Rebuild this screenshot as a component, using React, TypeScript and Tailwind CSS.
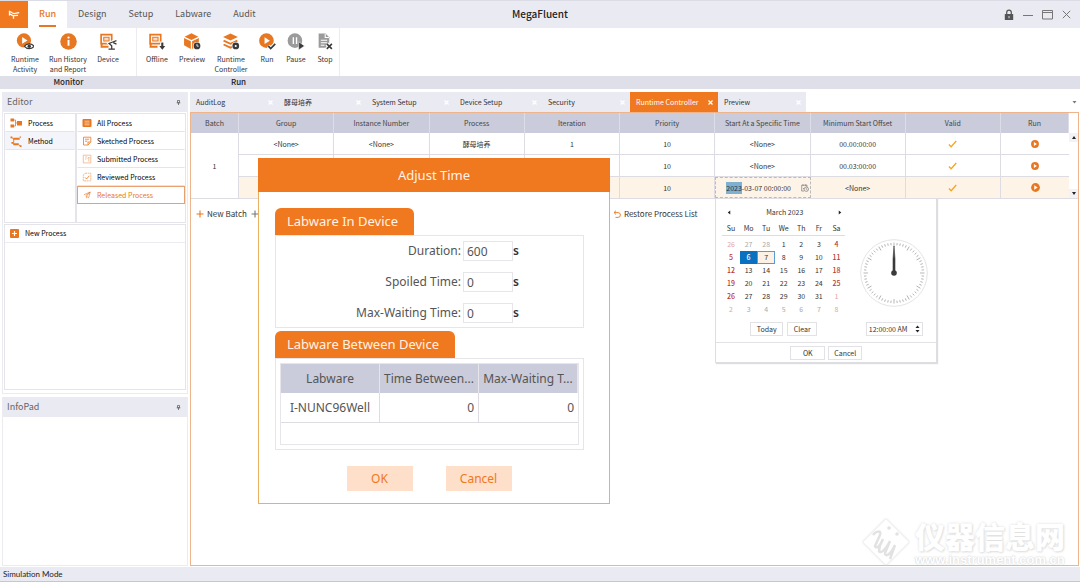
import { useEffect, useRef, type ReactNode } from 'react'
import clsx from 'clsx'

/* ---------- icons ---------- */

const ORANGE = '#e87722'
const DARK = '#3a3a3a'

function Eye() {
  return (
    <g>
      <path d="M8 12.5C10 9.5 15 9.5 17 12.5C15 15.5 10 15.5 8 12.5Z" fill="#fff" stroke={DARK} strokeWidth="1.2" />
      <circle cx="12.5" cy="12.5" r="1.6" fill={DARK} />
    </g>
  )
}

function ScreenShape() {
  return (
    <g>
      <path d="M2 1.5H12V10H2Z" fill="none" stroke={ORANGE} strokeWidth="1.6" />
      <path d="M4.5 4H9.5V7.5H4.5Z" fill="#fbd9bf" stroke={ORANGE} strokeWidth="1" />
      <path d="M1.5 13H9M2.5 10V13" stroke={ORANGE} strokeWidth="1.8" fill="none" />
    </g>
  )
}

const ribbonIcons: Record<string, ReactNode> = {
  activity: (
    <g>
      <circle cx="7.5" cy="7" r="6.7" fill={ORANGE} />
      <path d="M5.8 3.8L10.8 7L5.8 10.2Z" fill="#fff" />
      <Eye />
    </g>
  ),
  info: (
    <g>
      <circle cx="9" cy="8" r="7.8" fill={ORANGE} />
      <circle cx="9" cy="4.3" r="1.1" fill="#fff" />
      <path d="M9 6.5V12" stroke="#fff" strokeWidth="1.8" />
    </g>
  ),
  device: (
    <g>
      <ScreenShape />
      <path d="M9 15.5H15M12 15V12L9.5 9.8L13 8.5H16M12.5 8.5L16.5 7M13 9L16.5 10.5" stroke="#fff" strokeWidth="3" fill="none" />
      <path d="M9 15.3H15M12 15V12L9.5 9.8L13 8.5M13 8.5L16.5 7.2M13.5 9L16.5 10.5" stroke={DARK} strokeWidth="1.2" fill="none" />
    </g>
  ),
  offline: (
    <g>
      <ScreenShape />
      <path d="M13.5 8V15.5" stroke="#fff" strokeWidth="4" />
      <path d="M13.5 9V13" stroke={DARK} strokeWidth="2" />
      <path d="M10.7 12.2H16.3L13.5 15.8Z" fill={DARK} />
    </g>
  ),
  preview: (
    <g>
      <path d="M8 0.3L14.5 3.4L8 6.7L1.5 3.4Z" fill={ORANGE} />
      <path d="M1 4.6L7.4 7.8V15L1 11.6Z" fill={ORANGE} />
      <path d="M15 4.6L8.6 7.8V15L15 11.6Z" fill={ORANGE} />
      <circle cx="13.2" cy="12.2" r="3.8" fill="#fff" />
      <circle cx="13.2" cy="12.2" r="3.2" fill={DARK} />
      <path d="M13.2 10.3V12.4H14.8" stroke="#fff" strokeWidth="0.8" fill="none" />
    </g>
  ),
  layers: (
    <g>
      <path d="M8 0.5L15 3.7L8 7L1 3.7Z" fill={ORANGE} />
      <path d="M1.5 7.2L8 10.2L14.5 7.2M1.5 10.8L8 13.8L14.5 10.8" stroke={ORANGE} strokeWidth="1.7" fill="none" />
      <circle cx="13" cy="12.2" r="3.8" fill="#fff" />
      <circle cx="13" cy="12.2" r="3.2" fill={DARK} />
      <circle cx="13" cy="12.2" r="1" fill="#fff" />
    </g>
  ),
  run: (
    <g>
      <circle cx="8" cy="7.2" r="6.9" fill={ORANGE} />
      <path d="M6.2 4L11.2 7.2L6.2 10.4Z" fill="#fff" />
      <path d="M9.8 12.3L12 14.6L16.3 10.2" stroke="#fff" strokeWidth="3.6" fill="none" />
      <path d="M9.8 12.3L12 14.6L16.3 10.2" stroke={DARK} strokeWidth="1.6" fill="none" />
    </g>
  ),
  pause: (
    <g>
      <circle cx="7.5" cy="7.2" r="6.9" fill="#9b9b9b" />
      <path d="M6 4V10.4M9 4V10.4" stroke="#fff" strokeWidth="1.3" />
      <path d="M11 8.2L16.5 12.2L11 16Z" fill={DARK} stroke="#fff" strokeWidth="0.5" />
    </g>
  ),
  stop: (
    <g>
      <path d="M2.5 0.5H9L12.5 4V14H2.5Z" fill="#9b9b9b" />
      <path d="M8.7 1V4.3H12.3M4.5 6.8H10.5M4.5 9.2H10.5M4.5 11.6H8" stroke="#fff" strokeWidth="1" fill="none" />
      <path d="M10.2 10.2L15 15M15 10.2L10.2 15" stroke="#fff" strokeWidth="3.6" />
      <path d="M10.2 10.2L15 15M15 10.2L10.2 15" stroke={DARK} strokeWidth="1.5" />
    </g>
  ),
}

function PinIcon() {
  return (
    <svg viewBox="0 0 6 6" className="size-[5px]">
      <path d="M1.8 0.5H4.2V3.2H1.8ZM0.8 3.4H5.2M3 3.4V6" stroke="#666" strokeWidth="1" fill="none" />
    </svg>
  )
}

const listIcons: Record<string, ReactNode> = {
  all: (
    <g>
      <rect x="0.5" y="1" width="9" height="8" rx="1" fill={ORANGE} />
      <path d="M2.5 3.2H7.5M2.5 5H7.5M2.5 6.8H7.5" stroke="#ffd9b8" strokeWidth="0.8" />
    </g>
  ),
  sketched: (
    <path d="M1.5 1.2H8.8V6L6 9H1.5ZM8.6 6H6V8.8M3 3.2H7.2M3 5.2H5.5" stroke={ORANGE} strokeWidth="0.8" fill="none" />
  ),
  submitted: (
    <path d="M1.3 1.2H8.8V8.9H1.3ZM3 3H5.2M3 5H4.5M6.8 7.5V3.4M5.5 4.5L6.8 3.2L8 4.5" stroke="#f0a875" strokeWidth="0.7" fill="none" />
  ),
  reviewed: (
    <g stroke="#f0a875" strokeWidth="0.8" fill="none">
      <path d="M3 1.2H8.8V8.9H1.3V3Z" strokeDasharray="2 0.6" />
      <path d="M3 5.4L4.6 7L7.2 3.8" stroke={ORANGE} />
    </g>
  ),
  released: (
    <path d="M1.8 4.8L8.2 2L6.6 7.8L4.4 6.2L8.2 2L3.8 5.4M4.4 6.2V8.2" stroke={ORANGE} strokeWidth="0.6" fill="none" />
  ),
}

function PlayDot({ big }: { big?: boolean }) {
  return (
    <svg viewBox="0 0 10 10" className={clsx('mx-auto', big ? 'size-[9px]' : 'size-[8px]')}>
      <circle cx="5" cy="5" r="4.9" fill={ORANGE} />
      <path d="M3.6 2.5L7.4 5L3.6 7.5Z" fill="#fff" />
    </svg>
  )
}

function Tick() {
  return (
    <svg viewBox="0 0 10 9" className="mx-auto h-[8px] w-[9px]">
      <path d="M1 5L3.5 7.5L9.2 1.2" stroke="#f5a623" strokeWidth="1.5" fill="none" />
    </svg>
  )
}

/* ---------- title bar and ribbon ---------- */

const menus = ['Run', 'Design', 'Setup', 'Labware', 'Audit']

function TitleBar() {
  return (
    <header className="relative flex h-[28px] items-stretch border-t border-[#dcdce6] bg-[#eaeaf2]">
      <div className="flex w-[28px] items-center justify-center bg-[#f0781e]">
        <svg viewBox="0 0 12 12" className="size-[12px]">
          <path d="M1 2L4.5 4L6 4.6L11.2 3.6M1.5 2V6.5M2 5L4.8 6.6L10 6.4M5.5 6.6V9.8" stroke="#fff" strokeWidth="1.3" fill="none" />
        </svg>
      </div>
      <nav className="flex">
        {menus.map((m) => (
          <button
            key={m}
            className={clsx(
              'px-[11px] text-[9px] leading-[14px]',
              m === 'Run' ? 'bg-white font-medium text-[#e87722]' : 'text-[#555]',
            )}
          >
            <span className={clsx('block border-b-2 pt-[5px] pb-1', m === 'Run' ? 'border-[#e87722]' : 'border-transparent')}>{m}</span>
          </button>
        ))}
      </nav>
      <h1 className="absolute inset-x-0 top-[6px] mx-auto w-fit text-[10px] leading-[14px] font-medium text-[#222]">MegaFluent</h1>
      <div className="ml-auto flex items-center gap-[9px] pr-[9px]">
        <button aria-label="Lock">
          <svg viewBox="0 0 10 12" className="h-[12px] w-[10px]">
            <path d="M2.7 5.5V3.5A2.3 2.3 0 0 1 7.3 3.5V5.5" stroke="#555" strokeWidth="1.2" fill="none" />
            <rect x="0.8" y="5" width="8.4" height="6" rx="0.6" fill="#555" />
            <path d="M5 7V9.3" stroke="#ddd" strokeWidth="1" />
          </svg>
        </button>
        <button aria-label="Minimize">
          <svg viewBox="0 0 10 10" className="size-[10px]"><path d="M0 5.5H10" stroke="#777" /></svg>
        </button>
        <button aria-label="Maximize">
          <svg viewBox="0 0 11 10" className="h-[10px] w-[11px]">
            <path d="M0.5 0.5H10.5V9H0.5ZM0.5 2.5H10.5" stroke="#777" fill="none" />
          </svg>
        </button>
        <button aria-label="Close">
          <svg viewBox="0 0 9 9" className="size-[9px]"><path d="M0.8 0.8L8.2 8.2M8.2 0.8L0.8 8.2" stroke="#777" /></svg>
        </button>
      </div>
    </header>
  )
}

const groups = [
  {
    name: 'Monitor',
    box: 'w-[137px] pl-1',
    items: [
      { icon: 'activity', label: ['Runtime', 'Activity'], w: 'w-[42px]' },
      { icon: 'info', label: ['Run History', 'and Report'], w: 'w-[44px]' },
      { icon: 'device', label: ['Device'], w: 'w-[36px]' },
    ],
  },
  {
    name: 'Run',
    box: 'w-[203px] pl-[2px]',
    items: [
      { icon: 'offline', label: ['Offline'], w: 'w-[36px]' },
      { icon: 'preview', label: ['Preview'], w: 'w-[34px]' },
      { icon: 'layers', label: ['Runtime', 'Controller'], w: 'w-[44px]' },
      { icon: 'run', label: ['Run'], w: 'w-[28px]' },
      { icon: 'pause', label: ['Pause'], w: 'w-[30px]' },
      { icon: 'stop', label: ['Stop'], w: 'w-[28px]' },
    ],
  },
]

function Ribbon() {
  return (
    <div className="flex bg-linear-to-b from-white from-[48px] to-[#dedfe9] to-[48px]">
      {groups.map((g) => (
        <section key={g.name}>
          <div className={clsx('flex h-[48px] border-r border-[#ececf0] pt-[5px]', g.box)}>
            {g.items.map((it) => (
              <button key={it.icon} className={clsx('flex shrink-0 flex-col items-center text-[7px] leading-[10px] text-[#333]', it.w)}>
                <svg viewBox="0 0 17 16" className="mb-[4px] h-[17px] w-[18px]">{ribbonIcons[it.icon]}</svg>
                {it.label.map((l) => <span key={l} className="whitespace-nowrap">{l}</span>)}
              </button>
            ))}
          </div>
          <h2 className="text-center text-[8px] leading-[12px] font-medium text-[#222]">{g.name}</h2>
          <div className="h-px" />
        </section>
      ))}
    </div>
  )
}

/* ---------- left side ---------- */

const processLists = [
  { icon: 'all', label: 'All Process' },
  { icon: 'sketched', label: 'Sketched Process' },
  { icon: 'submitted', label: 'Submitted Process' },
  { icon: 'reviewed', label: 'Reviewed Process' },
  { icon: 'released', label: 'Released Process' },
]

function PanelHeader({ title }: { title: string }) {
  return (
    <div className="flex h-[20px] items-center justify-between bg-[#eaeaf2] pr-[6px] pl-1">
      <h2 className="text-[9px] leading-[14px] text-[#666]">{title}</h2>
      <button aria-label={`Pin ${title}`}><PinIcon /></button>
    </div>
  )
}

function Sidebar() {
  return (
    <aside className="flex w-[186px] shrink-0 flex-col gap-[3px] text-[7px] leading-[17px] text-black">
      <section className="flex h-[302px] flex-col border border-[#ececf0] border-t-0">
        <PanelHeader title="Editor" />
        <div className="mx-px mt-px flex h-[110px] border border-[#e4e4ea]">
          <div className="w-[72px] border-r-2 border-[#e4e4ea]">
            <button className="flex h-[18px] w-full items-center gap-[6px] border border-transparent border-b-[#e4e4ea] pl-1">
              <svg viewBox="0 0 12 10" className="h-[10px] w-[12px]">
                <path d="M0.5 0.5H4V3.5H0.5ZM0.5 6.5H4V9.5H0.5ZM7 3H12V7.5H7Z" fill={ORANGE} />
                <path d="M4 2H5.5V8H4M5.5 5H7" stroke={ORANGE} strokeWidth="0.8" fill="none" />
              </svg>
              <span>Process</span>
            </button>
            <button className="flex h-[18px] w-full items-center gap-[6px] border border-transparent border-b-[#e4e4ea] bg-[#f4f5fa] pl-1">
              <svg viewBox="0 0 12 12" className="h-[11px] w-[12px]">
                <path d="M0 0.5H2V2.5H0ZM3 1.8H10V4H3ZM3 8H9V10.2H3ZM1 6.5H3V8.5H1ZM10 10H12V12H10ZM10 0.5H11.5V2H10Z" fill={ORANGE} />
                <path d="M1.5 2L3.5 3M3.5 3.5V8.5M9 9.5L11 11" stroke={ORANGE} strokeWidth="1" fill="none" />
              </svg>
              <span>Method</span>
            </button>
          </div>
          <div className="flex-1">
            {processLists.map((p) => (
              <button
                key={p.icon}
                className={clsx(
                  'flex h-[18px] w-full items-center gap-[5px] border pl-1',
                  p.icon === 'released' ? 'border-[#e9a070] text-[#e87722]' : 'border-transparent border-b-[#e4e4ea]',
                )}
              >
                <svg viewBox="0 0 10 10" className="size-[10px] shrink-0">{listIcons[p.icon]}</svg>
                <span className="whitespace-nowrap">{p.label}</span>
              </button>
            ))}
          </div>
        </div>
        <div className="mx-px mt-px mb-[3px] flex-1 border border-[#e4e4ea]">
          <button className="flex h-[18px] w-full items-center gap-[6px] border-b border-[#ececf0] pl-[5px]">
            <svg viewBox="0 0 10 10" className="size-[9px]">
              <rect width="10" height="10" rx="1" fill={ORANGE} />
              <path d="M5 2.2V7.8M2.2 5H7.8" stroke="#fff" strokeWidth="1.3" />
            </svg>
            <span>New Process</span>
          </button>
        </div>
      </section>
      <section className="flex-1 border border-t-0 border-[#ececf0]">
        <PanelHeader title="InfoPad" />
      </section>
    </aside>
  )
}

/* ---------- date picker ---------- */

const weekDays = ['Su', 'Mo', 'Tu', 'We', 'Th', 'Fr', 'Sa']
// February 26 is the first visible day, 28 days in that month
const weeks = Array.from({ length: 6 }, (_, w) =>
  weekDays.map((_, d) => {
    const n = w * 7 + d - 2
    if (n < 1) return { day: n + 28, out: true }
    if (n > 31) return { day: n - 31, out: true }
    return { day: n, out: false }
  }),
)

function dayClass(day: number, out: boolean, col: number) {
  const weekend = col === 0 || col === 6
  if (out) return weekend ? 'text-[#e5a5a0]' : 'text-[#aaa]'
  if (day === 6) return 'bg-[#0a70c0] text-white font-medium'
  if (day === 7) return 'bg-[#fdf1e6] ring-1 ring-inset ring-[#5b9bd5] text-[#333]'
  return weekend ? 'text-[#c0392b] font-medium' : 'text-[#333]'
}

function Clock() {
  return (
    <svg viewBox="0 0 68 68" className="size-[68px]">
      <circle cx="34" cy="34" r="33.3" fill="#fff" stroke="#dcdcdc" strokeWidth="0.8" />
      {Array.from({ length: 60 }, (_, i) => (
        <path key={i} d={i % 5 ? 'M34 3.8V6.2' : 'M34 3.5V8'} stroke="#999" strokeWidth="0.7" transform={`rotate(${i * 6} 34 34)`} />
      ))}
      <path d="M34 7L35 20V34H33V20Z" fill={DARK} stroke={DARK} strokeWidth="0.6" />
      <circle cx="34" cy="34" r="2.8" fill={DARK} />
    </svg>
  )
}

const smallButton = 'h-[14px] border border-[#e2e2e6] bg-white text-center text-[7px] leading-[12px] text-[#333]'

function DatePopup() {
  return (
    <div className="absolute top-full left-0 z-10 w-[222px] border border-[#dedee2] bg-white text-[7px] leading-[10px] shadow-[1px_1px_1px_#ddd]">
      <div className="flex h-[143px] justify-between pr-2 pl-[6px]">
        <div className="w-[123px] pt-[8px]">
          <div className="flex items-center justify-between pr-[3px] pl-[5px]">
            <button aria-label="Previous month">
              <svg viewBox="0 0 4 6" className="h-[5px] w-[4px]"><path d="M3.5 0.5V5.5L0.5 3Z" fill="#222" /></svg>
            </button>
            <span>March 2023</span>
            <button aria-label="Next month">
              <svg viewBox="0 0 4 6" className="h-[5px] w-[4px]"><path d="M0.5 0.5V5.5L3.5 3Z" fill="#222" /></svg>
            </button>
          </div>
          <table className="mt-[5px] w-full table-fixed text-center">
            <thead>
              <tr>
                {weekDays.map((d) => <th key={d} className="h-[13px] border-b border-[#ddd] p-0 font-normal">{d}</th>)}
              </tr>
            </thead>
            <tbody>
              <tr className="h-[3px]" />
              {weeks.map((week, w) => (
                <tr key={w}>
                  {week.map(({ day, out }, col) => (
                    <td key={col} className="h-[13px] p-0">
                      <button className={clsx('block h-[13px] w-full leading-[13px]', dayClass(day, out, col))}>{day}</button>
                    </td>
                  ))}
                </tr>
              ))}
            </tbody>
          </table>
          <div className="mt-[6px] flex justify-center gap-1">
            <button className={clsx(smallButton, 'w-[33px]')}>Today</button>
            <button className={clsx(smallButton, 'w-[30px]')}>Clear</button>
          </div>
        </div>
        <div className="flex w-[68px] flex-col items-center pt-[40px]">
          <Clock />
          <div className="mt-[15px] flex h-[14px] w-[57px] items-center border border-[#e2e2e6] pr-[2px] pl-[2px]">
            <input aria-label="Time" defaultValue="12:00:00 AM" className="w-full min-w-0 text-[7px] leading-[12px] text-[#333] outline-none" />
            <span className="flex flex-col gap-[2px]">
              <button aria-label="Later"><svg viewBox="0 0 5 3" className="block h-[3px] w-[5px]"><path d="M0.5 3L2.5 0.5L4.5 3Z" fill="#222" /></svg></button>
              <button aria-label="Earlier"><svg viewBox="0 0 5 3" className="block h-[3px] w-[5px]"><path d="M0.5 0L2.5 2.5L4.5 0Z" fill="#222" /></svg></button>
            </span>
          </div>
        </div>
      </div>
      <div className="flex justify-center gap-[3px] border-t border-[#e2e2e6] pt-[3px] pb-[2px]">
        <button className={clsx(smallButton, 'w-[35px]')}>OK</button>
        <button className={clsx(smallButton, 'w-[34px]')}>Cancel</button>
      </div>
    </div>
  )
}

function StartTimeCell() {
  const ref = useRef<HTMLInputElement>(null)

  useEffect(() => {
    ref.current?.focus()
    ref.current?.setSelectionRange(0, 4)
  }, [])

  return (
    <td className="relative border-b border-[#dcdce2] p-0">
      <div className="flex h-[21px] items-center border border-dashed border-[#bbb] pr-px pl-[10px]">
        <input
          ref={ref}
          aria-label="Start at a specific time"
          defaultValue="2023-03-07 00:00:00"
          className="w-full min-w-0 text-[7px] leading-[12px] outline-none selection:bg-[#7fb0d0] selection:text-[#234]"
        />
        <svg viewBox="0 0 8 8" className="size-[8px] shrink-0">
          <path d="M0.7 1.2H6V3M0.7 1.2V7H3M2 0.3V2M4.7 0.3V2M2 4L3 5" stroke="#777" strokeWidth="0.7" fill="none" />
          <circle cx="5.3" cy="5.2" r="2.2" fill="none" stroke="#777" strokeWidth="0.7" />
          <path d="M5.3 4V5.4L6.5 6" stroke="#777" strokeWidth="0.6" fill="none" />
        </svg>
      </div>
      <DatePopup />
    </td>
  )
}

/* ---------- runtime controller ---------- */

const tabs = ['AuditLog', '酵母培养', 'System Setup', 'Device Setup', 'Security', 'Runtime Controller', 'Preview']
const columns = ['Group', 'Instance Number', 'Process', 'Iteration', 'Priority', 'Start At a Specific Time', 'Minimum Start Offset', 'Valid']
const rows = [
  ['<None>', '<None>', '酵母培养', '1', '10', '<None>', '00.00:00:00'],
  ['', '', '', '', '10', '<None>', '00.03:00:00'],
  ['', '', '', '', '10', '', '<None>'],
]

function Tabs() {
  return (
    <div className="flex h-[20px] items-stretch">
      <div className="flex bg-[#eaeaf2]">
        {tabs.map((t) => {
          const active = t === 'Runtime Controller'
          return (
            <div
              key={t}
              className={clsx('flex w-[88px] items-center justify-between pr-[5px] pl-[6px]', active ? 'bg-[#f0781e] text-white' : 'text-[#333]')}
            >
              <button className="text-[7px] leading-[12px] whitespace-nowrap">{t}</button>
              <button aria-label={`Close ${t}`}>
                <svg viewBox="0 0 6 6" className="size-[5px]"><path d="M0.6 0.6L5.4 5.4M5.4 0.6L0.6 5.4" stroke="#fff" strokeWidth="1.5" /></svg>
              </button>
            </div>
          )
        })}
      </div>
      <button aria-label="More tabs" className="ml-auto pr-[2px]">
        <svg viewBox="0 0 5 3" className="h-[3px] w-[5px]"><path d="M0.5 0H4.5L2.5 2.5Z" fill="#777" /></svg>
      </button>
    </div>
  )
}

function BatchTable() {
  const cell = 'h-[22px] border-r border-b border-[#dcdce2] p-0'
  return (
    <div className="flex">
      <div className="min-w-0 flex-1">
        <table className="w-full table-fixed border-separate border-spacing-0 text-center text-[7px] leading-[12px] text-[#333]">
          <colgroup>
            <col className="w-[48px]" />
            {columns.map((c) => <col key={c} />)}
            <col className="w-[68px]" />
          </colgroup>
          <thead>
            <tr className="bg-[#cacbdb] text-[#444]">
              {['Batch', ...columns, 'Run'].map((c) => (
                <th key={c} className="h-[20px] border-r border-[#dcdde8] p-0 font-normal whitespace-nowrap">{c}</th>
              ))}
            </tr>
          </thead>
          <tbody>
            {rows.map((r, i) => (
              <tr key={i} className={i === 2 ? 'bg-[#fef3e7]' : 'bg-white'}>
                {i === 0 && <td rowSpan={3} className={clsx(cell, 'bg-white')}>1</td>}
                {r.map((v, c) => (i === 2 && c === 5 ? <StartTimeCell key={c} /> : <td key={c} className={cell}>{v}</td>))}
                <td className={cell}><Tick /></td>
                <td className="border-b border-[#dcdce2] p-0">
                  <button aria-label="Run batch" className="block w-full"><PlayDot big={i === 2} /></button>
                </td>
              </tr>
            ))}
          </tbody>
        </table>
      </div>
      <div className="flex w-[9px] flex-col justify-between border-b border-[#dcdce2] pt-[20px]">
        <button aria-label="Scroll up" className="flex h-[9px] items-center justify-center bg-[#f3f3f5]">
          <svg viewBox="0 0 4 3" className="h-[3px] w-[4px]"><path d="M0 3L2 0L4 3Z" fill="#222" /></svg>
        </button>
        <button aria-label="Scroll down" className="flex h-[9px] items-center justify-center bg-[#f3f3f5]">
          <svg viewBox="0 0 4 3" className="h-[3px] w-[4px]"><path d="M0 0L2 3L4 0Z" fill="#222" /></svg>
        </button>
      </div>
    </div>
  )
}

function PlusIcon({ color }: { color: string }) {
  return (
    <svg viewBox="0 0 8 8" className="size-[8px]"><path d="M4 0.5V7.5M0.5 4H7.5" stroke={color} strokeWidth="1.1" /></svg>
  )
}

function Workspace() {
  return (
    <main className="flex min-w-0 flex-1 flex-col">
      <Tabs />
      <div className="flex-1 border border-[#eeb48c]">
        <BatchTable />
        <div className="flex items-center pt-[8px] pl-[5px] text-[8px] leading-[13px] text-[#333]">
          <button className="flex items-center gap-[3px]"><PlusIcon color={ORANGE} />New Batch</button>
          <button aria-label="Add" className="ml-1"><PlusIcon color="#777" /></button>
          <button className="ml-[354px] flex items-center gap-[3px]">
            <svg viewBox="0 0 8 8" className="size-[8px]">
              <path d="M1.3 2.6H5A2.4 2.4 0 0 1 5 7.4H2.5M3 0.7L1 2.6L3 4.5" stroke={ORANGE} strokeWidth="0.9" fill="none" />
            </svg>
            Restore Process List
          </button>
        </div>
      </div>
    </main>
  )
}

/* ---------- adjust time dialog ---------- */

const fields = [
  { id: 'duration', label: 'Duration:', value: '600' },
  { id: 'spoiled', label: 'Spoiled Time:', value: '0' },
  { id: 'max-waiting', label: 'Max-Waiting Time:', value: '0' },
]

function SectionTab({ children }: { children: ReactNode }) {
  return (
    <h3 className="w-fit rounded-t-[6px] bg-[#f0781e] pr-4 pl-3 text-[13px] leading-[27px] text-[#fff3e6]">{children}</h3>
  )
}

function AdjustTimeDialog() {
  return (
    <div
      role="dialog"
      aria-label="Adjust Time"
      className="absolute top-[158px] left-[258px] z-20 w-[352px] border border-[#e8b060] bg-white pb-[12px] font-['Noto_Sans','Noto_Sans_CJK_SC',sans-serif] text-[12px] leading-[18px] text-[#555]"
    >
      <h2 className="-mx-px -mt-px bg-[#f0781e] text-center text-[13px] leading-[34px] text-[#fff3e6]">Adjust Time</h2>
      <div className="px-4 pr-[25px] pt-[16px]">
        <SectionTab>Labware In Device</SectionTab>
        <div className="flex flex-col gap-[11px] border border-[#e6e6ea] pt-[5px] pb-1">
          {fields.map((f) => (
            <div key={f.id} className="flex items-center">
              <label htmlFor={f.id} className="w-[185px] text-right">{f.label}</label>
              <input id={f.id} defaultValue={f.value} className="ml-[2px] h-[20px] w-[50px] border border-[#e6e6ea] pl-[3px] outline-none" />
              <span className="font-semibold text-[#333]">s</span>
            </div>
          ))}
        </div>
        <div className="h-[3px]" />
        <SectionTab>Labware Between Device</SectionTab>
        <div className="border border-[#e6e6ea] p-1">
          <div className="border border-[#e6e6ea] pb-[21px]">
            <table className="w-full table-fixed border-separate border-spacing-0">
              <thead>
                <tr className="bg-[#cacbdb]">
                  {['Labware', 'Time Between...', 'Max-Waiting T...'].map((h) => (
                    <th key={h} className="h-[29px] border-r border-[#e6e6ea] p-0 font-normal whitespace-nowrap">{h}</th>
                  ))}
                </tr>
              </thead>
              <tbody>
                <tr>
                  <td className="h-[30px] border-r border-b border-[#dcdce2] p-0 text-center">I-NUNC96Well</td>
                  <td className="border-r border-b border-[#dcdce2] p-0 pr-1 text-right">0</td>
                  <td className="border-b border-[#dcdce2] p-0 pr-1 text-right">0</td>
                </tr>
              </tbody>
            </table>
          </div>
        </div>
      </div>
      <div className="flex justify-center gap-[33px] pt-4 pr-[10px]">
        <button className="h-[25px] w-[66px] bg-[#fddfca] text-[#f0781e]">OK</button>
        <button className="h-[25px] w-[66px] bg-[#fddfca] text-[#f0781e]">Cancel</button>
      </div>
    </div>
  )
}

/* ---------- watermark ---------- */

function Watermark() {
  return (
    <div className="pointer-events-none absolute right-[15px] bottom-[15px] flex items-center gap-[4px] text-white">
      <svg viewBox="0 0 50 50" className="size-[50px] drop-shadow-[0_0_1px_#ddd]">
        <path d="M25 2L48 25L25 48L2 25Z" fill="#fff" stroke="#f2f2f2" />
        <path
          d="M12 18C15 14 21 13 19 18L14 29C15 32 19 30 22 22M19 28L18 34C19 37 24 34 29 24L24 36C24 40 29 39 34 28L29 42"
          stroke="#e2e2e2"
          strokeWidth="2.5"
          fill="none"
        />
        <circle cx="28" cy="11" r="1.8" fill="#e2e2e2" />
        <circle cx="36" cy="17" r="1.8" fill="#e2e2e2" />
      </svg>
      <div>
        <div className="text-[30px] leading-[34px] font-black [text-shadow:0_0_3px_#ddd,1px_1px_2px_#e2e2e2]">仪器信息网</div>
        <div className="font-['Liberation_Sans',sans-serif] text-[13px] leading-[15px] font-bold [text-shadow:0_0_2px_#ccc,0_0_1px_#ddd]">www.instrument.com.cn</div>
      </div>
    </div>
  )
}

export default function App() {
  return (
    <div className="relative flex min-h-screen flex-col bg-white font-['Noto_Sans_CJK_SC',sans-serif]">
      <TitleBar />
      <Ribbon />
      <div className="mt-[3px] mb-px flex flex-1 gap-[2px] pr-px pl-[2px]">
        <Sidebar />
        <Workspace />
      </div>
      <footer className="h-[15px] border-b border-[#c4c8cc] bg-[#eaeaf2] pl-[3px] font-['Lato',sans-serif] text-[8px] leading-[14px] text-[#222]">
        Simulation Mode
      </footer>
      <AdjustTimeDialog />
      <Watermark />
    </div>
  )
}
